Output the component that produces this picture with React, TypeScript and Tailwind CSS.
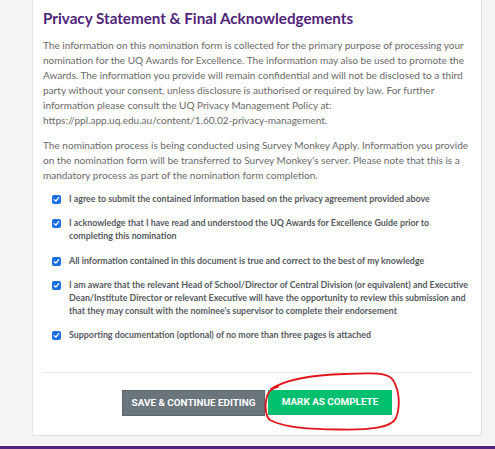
import React from "react";

const items = [
  "I agree to submit the contained information based on the privacy agreement provided above",
  "I acknowledge that I have read and understood the UQ Awards for Excellence Guide prior to completing this nomination",
  "All information contained in this document is true and correct to the best of my knowledge",
  "I am aware that the relevant Head of School/Director of Central Division (or equivalent) and Executive Dean/Institute Director or relevant Executive will have the opportunity to review this submission and that they may consult with the nominee's supervisor to complete their endorsement",
  "Supporting documentation (optional) of no more than three pages is attached",
];

function Check() {
  return (
    <span className="mt-[2px] flex h-[9px] w-[9px] shrink-0 items-center justify-center rounded-[2px] bg-[#1a6fe0]">
      <svg width="7" height="7" viewBox="0 0 10 10">
        <path d="M2 5.3 L4.2 7.4 L8.2 2.4" fill="none" stroke="white" strokeWidth="1.8" strokeLinecap="round" strokeLinejoin="round" />
      </svg>
    </span>
  );
}

export default function App() {
  return (
    <div className="relative flex h-[449px] w-[495px] flex-col overflow-hidden bg-[#f3f5f4] font-['Lato',sans-serif]">
      <div className="ml-[32px] w-[450px] border-x border-b border-[#e2e4e3] bg-white px-[10px] pb-[19px]">
        <h1 className="mt-[8px] text-[15.2px] font-bold leading-[20px] text-[#51247a]">
          Privacy Statement &amp; Final Acknowledgements
        </h1>
        <p className="mt-[10px] text-[10.05px] leading-[15px] text-[#6a6a6a]">
          The information on this nomination form is collected for the primary purpose of processing your nomination for the UQ Awards for Excellence. The information may also be used to promote the Awards. The information you provide will remain confidential and will not be disclosed to a third party without your consent, unless disclosure is authorised or required by law. For further information please consult the UQ Privacy Management Policy at: https://ppl.app.uq.edu.au/content/1.60.02-privacy-management.
        </p>
        <p className="mt-[9.5px] text-[10.05px] leading-[15px] text-[#6a6a6a]">
          The nomination process is being conducted using Survey Monkey Apply. Information you provide on the nomination form will be transferred to Survey Monkey's server. Please note that this is a mandatory process as part of the nomination form completion.
        </p>
        <div className="mt-[10px] flex flex-col gap-[12px] pl-[8.5px]">
          {items.map((t) => (
            <div key={t} className="flex gap-[8.5px]">
              <Check />
              <span className="text-[8.85px] font-bold leading-[12.7px] text-[#555a5e]">{t}</span>
            </div>
          ))}
        </div>
        <div className="mt-[30px] h-px bg-[#ececec]" />
        <div className="relative mt-[17px] flex justify-center gap-[3px]">
          <button className="h-[26px] w-[143px] border border-[#5d666d] bg-[#6b757c] font-['Roboto',sans-serif] text-[9.9px] font-bold text-white">
            SAVE &amp; CONTINUE EDITING
          </button>
          <button className="h-[25px] w-[124px] bg-[#00bf6f] font-['Roboto',sans-serif] text-[9.9px] font-bold text-white">
            MARK AS COMPLETE
          </button>
        </div>
      </div>
      <div className="mt-[9px] h-px bg-[#fbfbfb]" />
      <div className="h-[4px] bg-[#51247a]" />
      <svg className="absolute left-0 top-0" width="495" height="449" viewBox="0 0 495 449" fill="none">
        <path
          d="M271 389 C 285 380, 310 375, 345 374 C 370 373, 388 372, 393 380 C 399 390, 401 405, 396 418 C 391 428, 370 430, 340 429.5 C 310 429, 285 428, 270 420 C 264 415, 265 400, 268 394 C 270 390, 274 388, 278 387"
          stroke="#e0161c"
          strokeWidth="1.8"
          strokeLinecap="round"
        />
      </svg>
    </div>
  );
}
